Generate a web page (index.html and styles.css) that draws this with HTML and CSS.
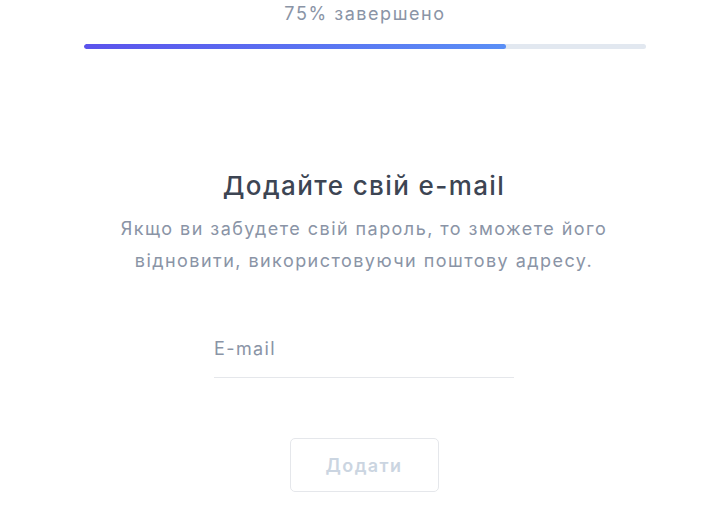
FILE: index.html
```html
<!DOCTYPE html>
<html lang="uk">
<head>
<meta charset="utf-8">
<link rel="stylesheet" href="styles.css">
</head>
<body>
<div class="page">
  <div class="progress">
    <div class="progress-label">75% завершено</div>
    <div class="progress-track"><div class="progress-fill" style="width:75%"></div></div>
  </div>
  <div class="form">
    <h1 class="title">Додайте свій e-mail</h1>
    <p class="subtitle">Якщо ви забудете свій пароль, то зможете його відновити, використовуючи поштову адресу.</p>
    <div class="field">
      <input class="input" type="email" placeholder="E-mail">
    </div>
    <button class="btn" disabled>Додати</button>
  </div>
</div>
</body>
</html>
```
FILE: styles.css
```css
* { box-sizing: border-box; }
html, body { margin: 0; padding: 0; background: #fff; }
body { font-family: Inter, "Noto Sans", sans-serif; }
.page { width: 728px; display: flex; flex-direction: column; align-items: center; }
.progress { width: 562px; margin-left: 2px; display: flex; flex-direction: column; align-items: center; }
.progress-label { font-size: 18px; line-height: 20px; color: #8a94a6; margin-top: 4px; letter-spacing: 1.55px; }
.progress-track { width: 100%; height: 5px; border-radius: 3px; background: #e2e8f0; margin-top: 20px; overflow: hidden; }
.progress-fill { height: 100%; border-radius: 3px; background: linear-gradient(90deg, #5b53ec, #5a8ff6); }
.form { display: flex; flex-direction: column; align-items: center; margin-top: 120px; }
.title { margin: 0; font-size: 26px; line-height: 34px; font-weight: 500; color: #3d4553; letter-spacing: 1.4px; }
.subtitle { margin: 10px 0 0; width: 520px; text-align: center; font-size: 18px; line-height: 32px; color: #8a94a6; letter-spacing: 1.45px; }
.field { margin-top: 61px; width: 300px; }
.input { display: block; width: 100%; border: 0; border-bottom: 1px solid #e5e7eb; padding: 0 0 17px; font-family: inherit; font-size: 18px; line-height: 22px; letter-spacing: 1.4px; color: #3d4553; outline: none; background: transparent; }
.input::placeholder { color: #8a94a6; }
.btn { margin-top: 60px; width: 149px; height: 54px; border: 1px solid #e5e7eb; border-radius: 5px; background: #fff; font-family: inherit; font-size: 18px; font-weight: 600; letter-spacing: 1.4px; color: #cbd5e1; }
```
